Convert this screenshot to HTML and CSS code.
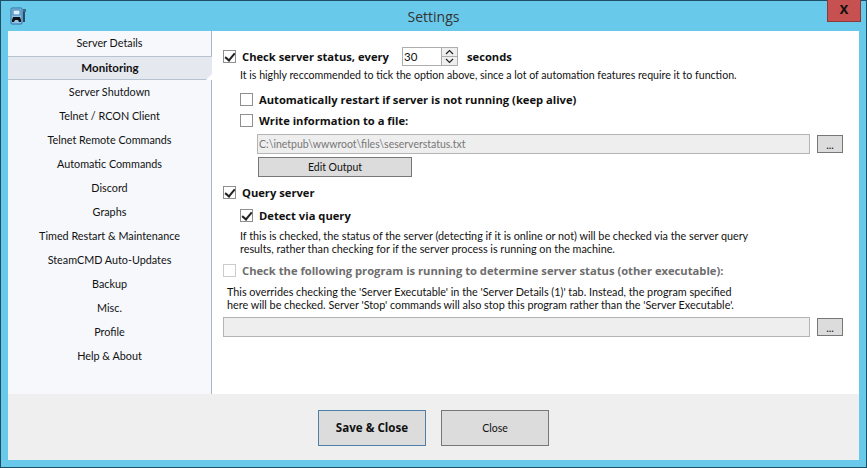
FILE: index.html
```html
<!DOCTYPE html>
<html lang="en">
<head>
<meta charset="utf-8">
<title>Settings</title>
<link rel="stylesheet" href="styles.css">
</head>
<body>
<div class="window">
  <header class="titlebar">
    <svg class="app-icon" width="17" height="18" viewBox="0 0 17 18">
      <rect x="1" y="1" width="11" height="16" rx="1" fill="#8fc4e8" stroke="#2f6f9f"/>
      <rect x="3" y="3" width="7" height="5" fill="#d8eefa" stroke="#3a7fb0"/>
      <path d="M2 13 L3 10 H10 L11 13 L11 15 H9 L8 13 H5 L4 15 H2 Z" fill="#111"/>
      <path d="M14 3 V15" stroke="#2a4a66" stroke-width="2"/>
      <rect x="13" y="2" width="3" height="3" fill="#3a6a8a"/>
    </svg>
    <div class="title">Settings</div>
    <div class="close-btn">x</div>
  </header>
  <div class="client">
    <div class="body">
      <nav class="sidebar">
        <div class="tab">Server Details</div>
        <div class="tab active">Monitoring</div>
        <div class="tab">Server Shutdown</div>
        <div class="tab">Telnet / RCON Client</div>
        <div class="tab">Telnet Remote Commands</div>
        <div class="tab">Automatic Commands</div>
        <div class="tab">Discord</div>
        <div class="tab">Graphs</div>
        <div class="tab">Timed Restart &amp; Maintenance</div>
        <div class="tab">SteamCMD Auto-Updates</div>
        <div class="tab">Backup</div>
        <div class="tab">Misc.</div>
        <div class="tab">Profile</div>
        <div class="tab">Help &amp; About</div>
      </nav>
      <main class="panel">
        <div class="row h-check-top">
          <span class="cb on"></span><b class="label">Check server status, every</b>
          <span class="spinner"><span class="spin-val">30</span><span class="spin-btns">
            <span class="spin-btn"><svg width="9" height="6" viewBox="0 0 9 6"><path d="M1 5 L4.5 1.5 L8 5" fill="none" stroke="#222" stroke-width="1.2"/></svg></span>
            <span class="spin-btn"><svg width="9" height="6" viewBox="0 0 9 6"><path d="M1 1 L4.5 4.5 L8 1" fill="none" stroke="#222" stroke-width="1.2"/></svg></span>
          </span></span>
          <b class="label seconds">seconds</b>
        </div>
        <p class="note n1">It is highly reccommended to tick the option above, since a lot of automation features require it to function.</p>
        <div class="row sub r-restart"><span class="cb"></span><b class="label">Automatically restart if server is not running (keep alive)</b></div>
        <div class="row sub r-write"><span class="cb"></span><b class="label">Write information to a file:</b></div>
        <div class="path-row pr1">
          <div class="field">C:\inetpub\wwwroot\files\seserverstatus.txt</div>
          <div class="btn dots">...</div>
        </div>
        <div class="btn edit">Edit Output</div>
        <div class="row r-query"><span class="cb on"></span><b class="label">Query server</b></div>
        <div class="row sub r-detect"><span class="cb on"></span><b class="label">Detect via query</b></div>
        <p class="note n2">If this is checked, the status of the server (detecting if it is online or not) will be checked via the server query<br>results, rather than checking for if the server process is running on the machine.</p>
        <div class="row r-other disabled"><span class="cb"></span><b class="label">Check the following program is running to determine server status (other executable):</b></div>
        <p class="note n3">This overrides checking the 'Server Executable' in the 'Server Details (1)' tab. Instead, the program specified<br>here will be checked. Server 'Stop' commands will also stop this program rather than the 'Server Executable'.</p>
        <div class="path-row pr2">
          <div class="field wide"></div>
          <div class="btn dots">...</div>
        </div>
      </main>
    </div>
    <footer class="footer">
      <div class="btn big primary">Save &amp; Close</div>
      <div class="btn big">Close</div>
    </footer>
  </div>
</div>
</body>
</html>
```
FILE: styles.css
```css
* { box-sizing: border-box; }
html, body { margin: 0; padding: 0; }
body { width: 867px; height: 468px; overflow: hidden; font-family: Lato, "Liberation Sans", sans-serif; font-size: 10.8px; color: #111; }
.window { width: 867px; height: 468px; background: #69c9ea; border: 1px solid #1d4f66; padding: 0 7px 7px; display: flex; flex-direction: column; }
.titlebar { height: 30px; display: flex; align-items: center; position: relative; flex: none; }
.app-icon { margin: 0 0 0 2px; }
.title { position: absolute; left: 0; right: 0; top: 6px; text-align: center; font: 14px/20px "Open Sans", sans-serif; color: #333; }
.close-btn { position: absolute; right: -2px; top: -1px; width: 34px; height: 22px; background: #c75050; border: 1px solid #8a3a3a; border-top: 0; color: #111; font: bold 16px/17px "Liberation Sans", sans-serif; text-align: center; }
.client { flex: 1; display: flex; flex-direction: column; background: #fff; min-height: 0; }
.body { flex: 1; display: flex; min-height: 0; }
.sidebar { width: 204px; flex: none; background: #f6f8fc; border-right: 1px solid #a9b6c6; padding-top: 1px; }
.tab { height: 24px; line-height: 22px; text-align: center; }
.tab.active { background: #e6e8ef; border-top: 1px solid #b6c3d1; border-bottom: 1px solid #b6c3d1; font-weight: 700; font-size: 11.5px; margin-right: -1px; position: relative; }
.tab.active::after { content: ""; position: absolute; right: 0; bottom: -1px; width: 6px; height: 6px; background: #fff; clip-path: polygon(100% 0, 100% 100%, 0 100%); }
.tab.active + .tab { margin-top: 1px; }
.panel { flex: 1; padding: 15px 0 0 11px; min-width: 0; }
.row { display: flex; align-items: center; height: 20px; white-space: nowrap; }
.label { font: 700 11.2px "Open Sans", sans-serif; margin-left: 6px; }
.cb { width: 13px; height: 13px; border: 1px solid #8f8f8f; background: #fff; position: relative; flex: none; }
.cb.on::after { content: ""; position: absolute; left: 3px; top: 0; width: 4px; height: 8px; border: solid #222; border-width: 0 2px 2px 0; transform: rotate(40deg); }
.spinner { display: flex; width: 56px; height: 19px; border: 1px solid #adadad; margin-left: 13px; background: #fff; }
.spin-val { flex: 1; padding-left: 1px; line-height: 17px; font-size: 11.5px; }
.spin-btns { width: 16px; background: #adadad; border-left: 1px solid #adadad; display: flex; flex-direction: column; gap: 1px; }
.spin-btn { flex: 1; background: #efefef; display: flex; align-items: center; justify-content: center; }
.seconds { margin-left: 9px; }
.note { margin: 0; white-space: nowrap; line-height: 13px; }
.n1 { margin: 3px 0 0 17px; font-size: 10.6px; }
.sub { padding-left: 17px; }
.r-restart { margin-top: 7px; }
.r-write { margin-top: 1px; }
.path-row { display: flex; gap: 7px; align-items: center; }
.pr1 { margin: 4px 0 0 34px; }
.field { width: 553px; height: 20px; background: #eee; border: 1px solid #b4b4b4; color: #777; font-size: 10.5px; line-height: 18px; padding-left: 1px; }
.btn { background: #dcdcdc; border: 1px solid #777; text-align: center; }
.dots { width: 26px; height: 18px; line-height: 17px; }
.edit { width: 154px; height: 20px; line-height: 18px; margin: 3px 0 0 35px; font-size: 10.5px; }
.r-query { margin-top: 5px; }
.r-detect { margin-top: 3px; }
.n2 { margin: 4px 0 0 17px; }
.r-other { margin-top: 5px; }
.disabled .cb { border-color: #ccc; }
.disabled .label { color: #6d6d6d; }
.n3 { margin: 5px 0 0 4px; }
.pr2 { margin: 6px 0 0 0; }
.wide { width: 587px; }
.footer { height: 66px; flex: none; background: #efefef; display: flex; gap: 15px; padding: 16px 0 0 310px; }
.big { width: 108px; height: 36px; line-height: 34px; font-size: 10.5px; }
.primary { border-color: #4f7fa8; font: 700 11.6px/34px "Open Sans", sans-serif; }
```
